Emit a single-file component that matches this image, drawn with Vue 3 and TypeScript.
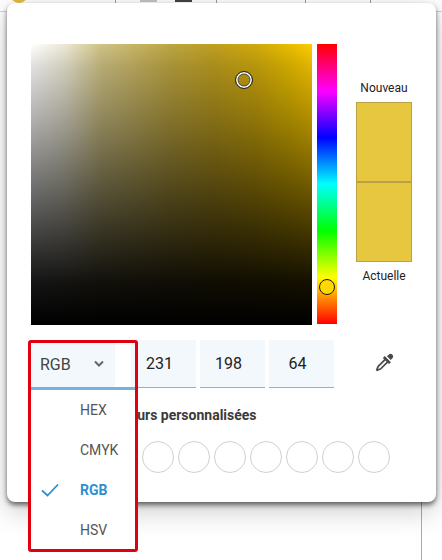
<script setup lang="ts">
const values: string[] = ['231', '198', '64']
const modes: string[] = ['HEX', 'CMYK', 'RGB', 'HSV']
const swatches: number[] = Array.from({ length: 10 }, (_, i) => i)
</script>

<template>
  <div class="page">
    <div class="backdrop">
      <div class="toolbar">
        <div class="cell cell-a"><span class="avatar"></span></div>
        <div class="cell cell-b"><span class="chip chip-light"></span><span class="chip chip-dark"></span></div>
        <div class="cell cell-c"></div>
        <div class="cell cell-d"></div>
      </div>
      <div class="sheet"></div>
    </div>

    <div class="dialog">
      <div class="picker">
        <div class="sv">
          <span class="sv-marker"></span>
        </div>
        <div class="hue">
          <span class="hue-marker"></span>
        </div>
        <div class="preview">
          <div class="preview-label">Nouveau</div>
          <div class="preview-swatches">
            <div class="swatch"></div>
            <div class="swatch"></div>
          </div>
          <div class="preview-label">Actuelle</div>
        </div>
      </div>

      <div class="inputs">
        <div class="select">
          <span>RGB</span>
          <svg class="chevron" viewBox="0 0 12 8" width="12" height="8">
            <path d="M2 1.5 L6 5.5 L10 1.5" fill="none" stroke="#666" stroke-width="2" />
          </svg>
          <div class="menu">
            <div v-for="m in modes" :key="m" class="menu-item" :class="{ active: m === 'RGB' }">
              <svg v-if="m === 'RGB'" class="check" viewBox="0 0 18 14" width="18" height="14">
                <path d="M1 7.5 L6.5 12.5 L17 1.5" fill="none" stroke="#2f8fd0" stroke-width="1.8" />
              </svg>
              {{ m }}
            </div>
          </div>
        </div>
        <div class="fields">
          <div v-for="v in values" :key="v" class="field">{{ v }}</div>
        </div>
        <svg class="dropper" viewBox="0 0 24 24" width="21" height="21">
          <path fill="#4a4a4a" d="M19.35,11.72L17.22,13.85L15.81,12.43L8.1,20.14L3.5,22L2,20.5L3.86,15.9L11.57,8.19L10.15,6.78L12.28,4.65L19.35,11.72M16.76,3C17.93,1.83 19.83,1.83 21,3C22.17,4.17 22.17,6.07 21,7.24L19.08,9.16L14.84,4.92L16.76,3M5.56,17.03L4.5,19.5L6.97,18.44L14.4,11L13,9.6L5.56,17.03Z" />
        </svg>
      </div>

      <div class="custom-title">Couleurs personnalisées</div>
      <div class="custom-row">
        <span v-for="s in swatches" :key="s" class="circle"></span>
      </div>
    </div>

    <div class="highlight"></div>
  </div>
</template>

<style>
html, body { margin: 0; background: #fff; }
</style>

<style scoped>
.page {
  position: relative;
  width: 442px;
  height: 560px;
  overflow: hidden;
  background: #fff;
  font-family: Roboto, "Liberation Sans", sans-serif;
}
.backdrop {
  position: absolute;
  inset: 0;
  display: flex;
  flex-direction: column;
}
.toolbar {
  display: flex;
  height: 11px;
  border-bottom: 1px solid #d4d4d4;
}
.cell {
  border-right: 1px solid #9a9a9a;
  box-sizing: border-box;
  display: flex;
  gap: 18px;
  align-items: flex-start;
}
.cell-a { width: 116px; position: relative; }
.cell-b { width: 101px; padding-left: 24px; }
.cell-c { width: 89px; }
.cell-d { width: 65px; }
.avatar {
  position: absolute;
  left: 10px;
  top: -15px;
  width: 18px;
  height: 18px;
  border-radius: 50%;
  background: #e7b93a;
}
.chip { width: 17px; height: 1.5px; }
.chip-light { background: #c4c4c4; }
.chip-dark { background: #444; }
.sheet {
  flex: 1;
  width: 422px;
  box-sizing: border-box;
  border-right: 1px solid #aaa;
}

.dialog {
  position: absolute;
  left: 7px;
  top: 3px;
  width: 429px;
  height: 499px;
  box-sizing: border-box;
  padding: 41px 0 0 24px;
  background: #fff;
  border-radius: 8px;
  box-shadow: 0 3px 5px rgba(0, 0, 0, 0.55), 0 8px 28px rgba(0, 0, 0, 0.22);
}

.picker {
  display: flex;
  height: 281px;
}
.sv {
  position: relative;
  width: 281px;
  height: 281px;
  background:
    linear-gradient(
      to bottom,
      rgba(0, 0, 0, 0) 0%,
      rgba(0, 0, 0, 0.12) 8%,
      rgba(0, 0, 0, 0.34) 30%,
      rgba(0, 0, 0, 0.66) 60%,
      rgba(0, 0, 0, 0.92) 85%,
      #000 100%
    ),
    linear-gradient(
      to right,
      #fff 0%,
      #ece8d4 12%,
      #cfc285 25%,
      #bda540 50%,
      #bf9f20 65%,
      #cfa90c 80%,
      #e8bd00 92%,
      #ffcc00 100%
    );
}
.sv-marker {
  position: absolute;
  left: 204px;
  top: 27px;
  width: 18px;
  height: 18px;
  box-sizing: border-box;
  border-radius: 50%;
  border: 1px solid #222;
  box-shadow: inset 0 0 0 1.6px #fff, inset 0 0 0 2.2px #333;
}
.hue {
  position: relative;
  width: 20px;
  height: 280px;
  margin-left: 5px;
  background: linear-gradient(
    to bottom,
    #ff0000 0%,
    #ff00ff 16.67%,
    #0000ff 33.33%,
    #00ffff 50%,
    #00ff00 66.67%,
    #ffff00 83.33%,
    #ff0000 100%
  );
}
.hue-marker {
  position: absolute;
  left: 2px;
  top: 235px;
  width: 16px;
  height: 16px;
  box-sizing: border-box;
  border-radius: 50%;
  border: 1.5px solid #1a1a1a;
  background: #ffd800;
}
.preview {
  width: 56px;
  margin-left: 19px;
  display: flex;
  flex-direction: column;
  align-items: center;
  padding-top: 37px;
}
.preview-label {
  font-size: 12px;
  line-height: 14px;
  color: #222;
  white-space: nowrap;
}
.preview-swatches {
  width: 56px;
  margin: 7px 0 7px;
}
.swatch {
  height: 80px;
  box-sizing: border-box;
  background: #e7c640;
  border: 1px solid #b9a245;
}
.swatch + .swatch { margin-top: -0.5px; }

.inputs {
  display: flex;
  align-items: flex-start;
  margin-top: 15px;
  height: 48px;
}
.select {
  position: relative;
  width: 84px;
  height: 48px;
  box-sizing: border-box;
  padding: 0 9px;
  display: flex;
  align-items: center;
  justify-content: space-between;
  background: #f3f8fd;
  font-size: 16px;
  color: #444;
}
.chevron { margin-right: 1px; }
.menu {
  position: absolute;
  left: 0;
  top: 47px;
  width: 104px;
  border-top: 3px solid #74b3e0;
  background: #fff;
  z-index: 2;
}
.menu-item {
  position: relative;
  height: 40px;
  line-height: 40px;
  padding-left: 49px;
  font-size: 14px;
  color: #555;
}
.menu-item.active {
  color: #2f8fd0;
  font-weight: 700;
}
.check {
  position: absolute;
  left: 10px;
  top: 13px;
}
.fields {
  display: flex;
  gap: 4px;
  margin-left: 16px;
}
.field {
  width: 65px;
  height: 48px;
  line-height: 48px;
  box-sizing: border-box;
  border-bottom: 1px solid #7fb8d0;
  background: #f3f8fd;
  padding-right: 8px;
  text-align: center;
  font-size: 16px;
  color: #222;
}
.dropper { margin: 12px 0 0 40px; }

.custom-title {
  margin: 19px 0 0 70px;
  font-size: 14px;
  line-height: 16px;
  font-weight: 700;
  color: #3a3a3a;
}
.custom-row {
  display: flex;
  gap: 4px;
  margin: 18px 0 0 3px;
}
.circle {
  width: 32px;
  height: 32px;
  box-sizing: border-box;
  border-radius: 50%;
  border: 1px solid #d0d0d0;
}

.highlight {
  position: absolute;
  left: 28px;
  top: 340px;
  width: 110px;
  height: 212px;
  box-sizing: border-box;
  border: 3.5px solid #e0000f;
  border-radius: 3px;
  pointer-events: none;
  z-index: 5;
}
</style>
